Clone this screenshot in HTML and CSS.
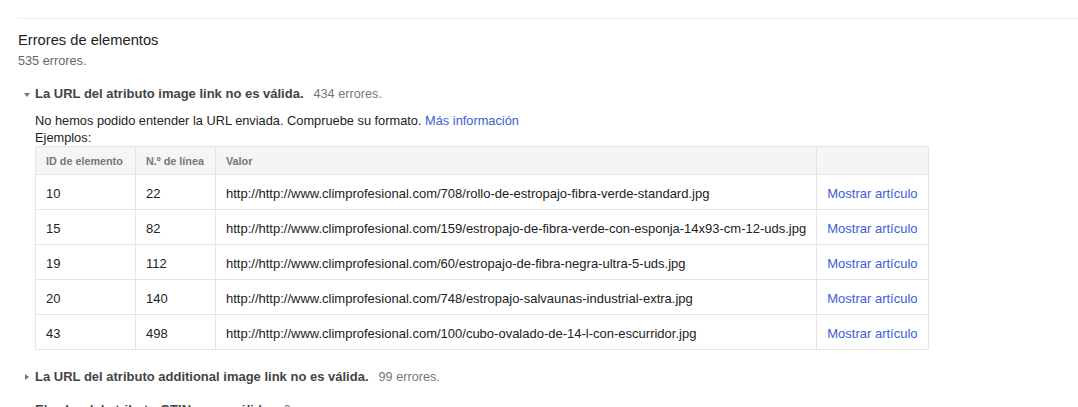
FILE: index.html
```html
<!DOCTYPE html>
<html lang="es">
<head>
<meta charset="utf-8">
<link rel="stylesheet" href="styles.css">
</head>
<body>
<div class="page">
  <hr class="rule">
  <h2 class="title">Errores de elementos</h2>
  <div class="count">535 errores.</div>

  <div class="issue open">
    <div class="issue-head"><span class="tri down"></span><b>La URL del atributo image link no es válida.</b><span class="n">434 errores.</span></div>
    <div class="issue-body">
      <div class="desc">No hemos podido entender la URL enviada. Compruebe su formato. <a href="#">Más información</a></div>
      <div class="ex">Ejemplos:</div>
      <table class="tbl">
        <thead>
          <tr><th class="c1">ID de elemento</th><th class="c2">N.º de línea</th><th class="c3">Valor</th><th class="c4"></th></tr>
        </thead>
        <tbody>
          <tr><td>10</td><td>22</td><td>http://http://www.climprofesional.com/708/rollo-de-estropajo-fibra-verde-standard.jpg</td><td><a href="#">Mostrar artículo</a></td></tr>
          <tr><td>15</td><td>82</td><td>http://http://www.climprofesional.com/159/estropajo-de-fibra-verde-con-esponja-14x93-cm-12-uds.jpg</td><td><a href="#">Mostrar artículo</a></td></tr>
          <tr><td>19</td><td>112</td><td>http://http://www.climprofesional.com/60/estropajo-de-fibra-negra-ultra-5-uds.jpg</td><td><a href="#">Mostrar artículo</a></td></tr>
          <tr><td>20</td><td>140</td><td>http://http://www.climprofesional.com/748/estropajo-salvaunas-industrial-extra.jpg</td><td><a href="#">Mostrar artículo</a></td></tr>
          <tr><td>43</td><td>498</td><td>http://http://www.climprofesional.com/100/cubo-ovalado-de-14-l-con-escurridor.jpg</td><td><a href="#">Mostrar artículo</a></td></tr>
        </tbody>
      </table>
    </div>
  </div>

  <div class="issue">
    <div class="issue-head"><span class="tri right"></span><b>La URL del atributo additional image link no es válida.</b><span class="n">99 errores.</span></div>
  </div>
  <div class="issue">
    <div class="issue-head"><span class="tri right"></span><b>El valor del atributo GTIN no es válido.</b><span class="n">2 errores.</span></div>
  </div>
</div>
</body>
</html>
```
FILE: styles.css
```css
html, body { margin: 0; padding: 0; background: #fff; }
body { font-family: "Liberation Sans", Arial, sans-serif; color: #222; font-size: 13px; }
.page { padding: 18px 0 0 18px; overflow: hidden; height: 389px; }
.rule { border: 0; border-top: 1px solid #ebebeb; margin: 0; }
.title { font-size: 14.7px; font-weight: normal; margin: 11px 0 0; line-height: 20px; color: #222; }
.count { font-size: 12.7px; color: #666; line-height: 16px; margin-top: 3px; }
.issue { margin-top: 17px; }
.issue-head { display: flex; align-items: center; font-size: 13px; line-height: 16px; color: #444; }
.issue-head b { color: #444; }
.issue-head .n { color: #777; margin-left: 10px; font-size: 12.7px; }
.tri { width: 17px; display: inline-flex; justify-content: flex-start; align-items: center; height: 16px; }
.tri.down::before { content: ""; border-left: 3px solid transparent; border-right: 3px solid transparent; border-top: 4px solid #777; margin-left: 6px; margin-top: 1px; }
.tri.right::before { content: ""; border-top: 3px solid transparent; border-bottom: 3px solid transparent; border-left: 4px solid #777; margin-left: 7px; }
.issue-body { padding-left: 17px; margin-top: 10px; }
.desc { font-size: 12.8px; line-height: 18px; }
.ex { font-size: 12.8px; line-height: 16px; }
a { color: #3b5ed6; text-decoration: none; }
.tbl { border-collapse: collapse; margin-top: 0; font-size: 13px; table-layout: fixed; }
.tbl th, .tbl td { border: 1px solid #e5e5e5; text-align: left; padding: 0 10px; white-space: nowrap; }
.tbl th { background: #f5f5f5; color: #777; font-size: 10.8px; font-weight: bold; height: 28px; box-sizing: border-box; }
.tbl td { height: 32px; color: #222; padding-top: 2px; }
.c1 { width: 100px; }
.c2 { width: 80px; }
.c3 { width: 600px; }
.c4 { width: 112px; }
.issue.open + .issue { margin-top: 19px; }
```
